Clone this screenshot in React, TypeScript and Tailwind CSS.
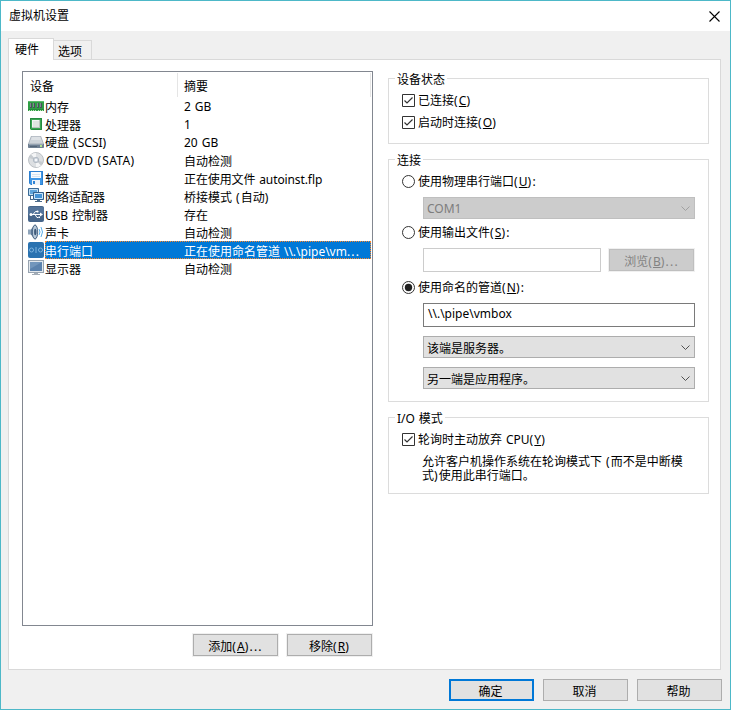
import React, { ReactNode } from 'react';

/* Brackets and ellipses are set slightly wider than the rest of the line. */
function Label({ text }: { text: string }) {
  return (
    <>
      {text.split(/([()]|\.\.\.)/).map((part, i) =>
        i % 2 ? (
          <span key={i} className="tracking-[1.2px]">
            {part}
          </span>
        ) : (
          part
        ),
      )}
    </>
  );
}

/* Text with an underlined access key, e.g. 添加(A)... */
function Key({ text, k, tail = '' }: { text: string; k: string; tail?: string }) {
  return (
    <span>
      <Label text={text + '('} />
      <span className="underline underline-offset-1">{k}</span>
      <Label text={')' + tail} />
    </span>
  );
}

function Svg({ children }: { children: ReactNode }) {
  return (
    <svg className="block size-4 shrink-0" width="16" height="16" viewBox="0 0 16 16">
      {children}
    </svg>
  );
}

const MemoryIcon = () => (
  <Svg>
    <path d="M0 3h16v10H0z" fill="#2f9e45" />
    <path d="M0 3h16v1H0z" fill="#5cbb6e" />
    <path d="M2 5h2v5H2zM5 5h2v5H5zM9 5h2v5H9zM12 5h2v5h-2z" fill="#47545a" />
    <path d="M2 5h1v4H2zM5 5h1v4H5zM9 5h1v4H9zM12 5h1v4h-1z" fill="#7d8b90" />
    <path d="M0 11h16v1H0z" fill="#238a3a" />
    <path d="M1 12h1v1H1zM3 12h1v1H3zM5 12h1v1H5zM7 12h1v1H7zM10 12h1v1h-1zM12 12h1v1h-1zM14 12h1v1h-1z" fill="#b7e0b2" />
  </Svg>
);
const CpuIcon = () => (
  <Svg>
    <path d="M2 2h12v12H3l-1-1z" fill="#3aa653" />
    <path d="M2.500 2.500h11v11h-10l-1-1z" fill="none" stroke="#26893f" />
    <rect x="4" y="4" width="8" height="8" fill="#b9c4bd" />
    <rect x="4" y="4" width="7" height="7" fill="#f3f6f4" />
    <rect x="5" y="5" width="6" height="6" fill="#dfe5e1" />
  </Svg>
);
const DiskIcon = () => (
  <Svg>
    <path d="M3 2h10l3 8v4H0v-4z" fill="#a4adb6" />
    <path d="M3.500 2.500h9L15 9.500H1z" fill="#cdd3d9" />
    <path d="M4 3h8l1 3H3z" fill="#dde1e5" />
    <path d="M0 10h16v3l-1 1H1l-1-1z" fill="#6e7f92" />
    <path d="M1 10h14v1H1z" fill="#95a3b2" />
    <path d="M12 11h2v2h-2z" fill="#b4e88e" />
    <path d="M2 12h7v1H2z" fill="#536579" />
  </Svg>
);
const CdIcon = () => (
  <Svg>
    <circle cx="8" cy="8" r="7.500" fill="#dcdfe2" stroke="#b0b5ba" strokeWidth=".8" />
    <path d="M8 8 3 2.500A7.500 7.500 0 0 1 8 1zM8 8l5 5.500A7.500 7.500 0 0 1 8 15z" fill="#f4f5f6" />
    <path d="M8 8 1 6a7 7 0 0 1 2-3.500zM8 8l7 2a7 7 0 0 1-2 3.500z" fill="#c6cbd0" />
    <circle cx="8" cy="8" r="2.700" fill="#d0d7e0" stroke="#a4adb8" strokeWidth=".7" />
    <circle cx="8" cy="8" r="1.100" fill="#fff" />
  </Svg>
);
const FloppyIcon = () => (
  <Svg>
    <path d="M1 1h14v14H3l-2-2z" fill="#3f97e6" />
    <path d="M1.500 1.500h13v13H3l-1.500-1.500z" fill="none" stroke="#2c7fd0" />
    <path d="M3 2h10v6H3z" fill="#f8fbfe" />
    <path d="M4 4h8v1H4zM4 6h8v1H4z" fill="#d5e4f2" />
    <path d="M4 10h8v5H4z" fill="#eef3f8" />
    <path d="M5 11h2v3H5z" fill="#2f83d3" />
  </Svg>
);
const NetworkIcon = () => (
  <Svg>
    <path d="M.5.5h10v7H.5z" fill="#5fa4da" stroke="#3b6a96" />
    <path d="M1.500 1.500h8v5h-8z" fill="none" stroke="#c3e0f5" />
    <path d="M5.500 4.500h10v7h-10z" fill="#4694d6" stroke="#335f8a" />
    <path d="M6.500 5.500h8v5h-8z" fill="none" stroke="#cbe6fb" />
    <path d="M9 12h3v1h2v1H7v-1h2zM2 8h1v3h2v1H2z" fill="#4c6b8a" />
  </Svg>
);
const UsbIcon = () => (
  <Svg>
    <rect width="16" height="16" rx="2" fill="#46658a" />
    <path d="M0 3a2 2 0 0 1 2-2h12a2 2 0 0 1 2 2v5H0z" fill="#54749a" />
    <path d="M3 8.500h9M5 8.500 7.500 5.500H9M7 8.500l2 3h1.500" fill="none" stroke="#fff" />
    <circle cx="3" cy="8.500" r="1.500" fill="#fff" />
    <path d="M12 6.500l3 2-3 2zM10.500 10.500H12V12h-1.500z" fill="#fff" />
    <circle cx="9.500" cy="5.500" r="1.100" fill="#fff" />
  </Svg>
);
const SoundIcon = () => (
  <Svg>
    <path d="M0 5.500h3L7.500.5v15L3 10.500H0z" fill="#8ea4ba" />
    <path d="M3 5.500l4.500-5v15L3 10.500z" fill="#5d7a99" />
    <ellipse cx="7" cy="8" rx="2.700" ry="7" fill="#b8c9d9" stroke="#4a6685" />
    <ellipse cx="7.300" cy="8" rx="1.200" ry="3.200" fill="#3f5b7a" />
    <path d="M11 5q2 3 0 6M13 3q3 5 0 10" fill="none" stroke="#5aaee8" />
  </Svg>
);
const SerialIcon = () => (
  <Svg>
    <rect width="16" height="16" rx="2" fill="#2a72b0" />
    <circle cx="3.500" cy="8" r="2" fill="none" stroke="#7db3df" />
    <path d="M8 5v6" stroke="#7db3df" />
    <circle cx="12.500" cy="8" r="2" fill="none" stroke="#7db3df" />
  </Svg>
);
const DisplayIcon = () => (
  <Svg>
    <path d="M0 0h16v13H0z" fill="#97a3b0" />
    <path d="M1 1h14v11H1z" fill="#e3e8ed" />
    <path d="M2 2h12v9H2z" fill="#5b82ad" />
    <path d="M2 2h12L2 9z" fill="#7296bc" />
    <path d="M6 13h4v1h2v1H4v-1h2z" fill="#a3adb7" />
  </Svg>
);

const devices: { icon: ReactNode; name: string; summary: string; selected?: boolean }[] = [
  { icon: <MemoryIcon />, name: '内存', summary: '2 GB' },
  { icon: <CpuIcon />, name: '处理器', summary: '1' },
  { icon: <DiskIcon />, name: '硬盘 (SCSI)', summary: '20 GB' },
  { icon: <CdIcon />, name: 'CD/DVD (SATA)', summary: '自动检测' },
  { icon: <FloppyIcon />, name: '软盘', summary: '正在使用文件 autoinst.flp' },
  { icon: <NetworkIcon />, name: '网络适配器', summary: '桥接模式 (自动)' },
  { icon: <UsbIcon />, name: 'USB 控制器', summary: '存在' },
  { icon: <SoundIcon />, name: '声卡', summary: '自动检测' },
  { icon: <SerialIcon />, name: '串行端口', summary: '正在使用命名管道 \\\\.\\pipe\\vm...', selected: true },
  { icon: <DisplayIcon />, name: '显示器', summary: '自动检测' },
];

/* Chinese cells sit one pixel lower than purely Latin ones. */
const cellOffset = (s: string) => (/[\u4e00-\u9fff]/.test(s) && !s.includes('SCSI') ? 'pt-px ' : '');

function DeviceList() {
  return (
    <div className="flex h-[555px] w-[351px] flex-col border border-[#828790] bg-white pl-[5px]">
      <div className="flex h-[25px] pt-px leading-[28px]">
        <div className="w-[150px] border-r border-[#e5e5e5] pl-[2px]">设备</div>
        <div className="w-[193px] border-r border-[#e5e5e5] pl-[6px]">摘要</div>
      </div>
      {devices.map((d) => (
        <div key={d.name} className="flex h-[18px] items-center">
          {d.icon}
          <div
            className={
              'ml-px flex h-[18px] w-[326px] border border-dotted leading-[18px] whitespace-nowrap ' +
              (d.selected ? 'border-[#ff8728] bg-[#0078d7] text-white' : 'border-transparent')
            }
          >
            <div
              className={
                cellOffset(d.name) +
                (d.name.startsWith('CD') ? 'w-[138px] tracking-[0.3px]' : '-ml-px w-[139px]')
              }
            >
              <Label text={d.name} />
            </div>
            <div className={cellOffset(d.summary) + (d.summary.endsWith('flp') ? 'tracking-[-0.1px]' : '')}>
              <Label text={d.summary} />
            </div>
          </div>
        </div>
      ))}
    </div>
  );
}

function Group({ title, className, children }: { title: string; className: string; children: ReactNode }) {
  return (
    <section className={'w-[321px] border border-[#dcdcdc] ' + className}>
      <div className="-mt-2 ml-[6px] h-4 w-fit bg-white px-[2px] leading-[18px]">{title}</div>
      {children}
    </section>
  );
}

function Check({ children }: { children: ReactNode }) {
  return (
    <label className="ml-[13px] flex h-[13px] items-center gap-[3px] whitespace-nowrap">
      <svg className="shrink-0" width="13" height="13" viewBox="0 0 13 13">
        <path d="M.5.5h12v12H.5z" fill="#fff" stroke="#333" />
        <path d="M2.500 6.500 5 9l5.500-5.500" fill="none" stroke="#333" strokeWidth="1.200" />
      </svg>
      {children}
    </label>
  );
}

function Radio({ on, children }: { on?: boolean; children: ReactNode }) {
  return (
    <label className="ml-[13px] flex h-[13px] items-center gap-[3px] whitespace-nowrap">
      <svg className="shrink-0" width="13" height="13" viewBox="0 0 13 13">
        <circle cx="6.500" cy="6.500" r="6" fill="#fff" stroke="#333" />
        {on && <circle cx="6.500" cy="6.500" r="3.700" fill="#222" />}
      </svg>
      {children}
    </label>
  );
}

function Select({ disabled, className, children }: { disabled?: boolean; className: string; children: ReactNode }) {
  return (
    <div
      className={
        'ml-[34px] flex h-[22px] w-[272px] items-center justify-between border pr-[3px] pl-[3px] ' +
        (disabled ? 'border-[#bfbfbf] bg-[#ccc] text-[#7d7d7d] ' : 'border-[#adadad] bg-[#e1e1e1] ') +
        className
      }
    >
      <span className={disabled ? 'pt-[2px]' : 'pt-[3px]'}>{children}</span>
      <svg width="11" height="7" viewBox="0 0 11 7">
        <path d="M1.500 1.500l4 4 4-4" fill="none" stroke={disabled ? '#a0a0a0' : '#505050'} />
      </svg>
    </div>
  );
}

function Button({ className = '', children }: { className?: string; children: ReactNode }) {
  return (
    <button
      className={
        'flex h-[22px] w-[85px] items-center justify-center whitespace-nowrap ' +
        (className || 'border border-[#adadad] bg-[#e1e1e1] pt-[4px] pr-[2px]')
      }
    >
      {children}
    </button>
  );
}

export default function App() {
  return (
    <div className="flex h-[710px] w-[731px] flex-col overflow-hidden border border-[#4db8c8] bg-[#f0f0f0] font-['Noto_Sans','Noto_Sans_CJK_SC',sans-serif] text-[12px] leading-4 text-black [word-spacing:0.8px]">
      <header className="flex h-[30px] shrink-0 items-center justify-between bg-white pr-[10px] pl-2">
        <span>虚拟机设置</span>
        <svg width="11" height="11" viewBox="0 0 11 11">
          <path d="M.5.5l10 10M10.500.5l-10 10" stroke="#000" strokeWidth="1.100" />
        </svg>
      </header>

      <nav className="flex h-[28px] shrink-0 items-end pl-[7px]">
        <div className="z-10 -mb-px h-[22px] w-[46px] border border-b-0 border-[#d9d9d9] bg-white pl-[6px] leading-[21px]">
          硬件
        </div>
        <div className="h-[19px] w-[38px] border-t border-r border-[#d9d9d9] pl-[4px] leading-[21px]">选项</div>
      </nav>

      <main className="ml-[7px] flex h-[611px] w-[713px] shrink-0 border border-[#d9d9d9] bg-white pt-[11px] pl-[13px]">
        <div className="w-[351px]">
          <DeviceList />
          <div className="mt-2 flex justify-end gap-[9px] pr-px">
            <Button className="border border-[#adadad] bg-[#e1e1e1] pt-[3px] outline outline-[#f0f0f0]">
              <Key text="添加" k="A" tail="..." />
            </Button>
            <Button className="border border-[#adadad] bg-[#e1e1e1] pt-[3px] outline outline-[#f0f0f0]">
              <Key text="移除" k="R" />
            </Button>
          </div>
        </div>

        <div className="ml-[15px] flex flex-col pt-[7px]">
          <Group title="设备状态" className="h-[66px]">
            <div className="mt-[7px] flex flex-col gap-[9px]">
              <Check>
                <Key text="已连接" k="C" />
              </Check>
              <Check>
                <Key text="启动时连接" k="O" />
              </Check>
            </div>
          </Group>

          <Group title="连接" className="mt-[15px] h-[243px]">
            <div className="mt-[7px]">
              <Radio>
                <Key text="使用物理串行端口" k="U" tail=":" />
              </Radio>
              <Select disabled className="mt-[9px]">
                COM1
              </Select>
              <div className="mt-[7px]">
                <Radio>
                  <Key text="使用输出文件" k="S" tail=":" />
                </Radio>
              </div>
              <div className="mt-[9px] ml-[34px] flex items-center gap-2">
                <div className="h-6 w-[178px] border border-[#ccc] bg-white" />
                <Button className="border border-[#bfbfbf] bg-[#ccc] pt-[3px] text-[#838383] outline outline-[#f0f0f0]">
                  <Key text="浏览" k="B" tail="..." />
                </Button>
              </div>
              <div className="mt-[9px]">
                <Radio on>
                  <Key text="使用命名的管道" k="N" tail=":" />
                </Radio>
              </div>
              <div className="mt-[9px] ml-[34px] h-6 w-[272px] border border-[#7a7a7a] bg-white pl-1 leading-5">
                {'\\\\.\\pipe\\vmbox'}
              </div>
              <Select className="mt-[9px]">该端是服务器。</Select>
              <Select className="mt-[9px]">另一端是应用程序。</Select>
            </div>
          </Group>

          <Group title="I/O 模式" className="mt-[15px] h-[77px]">
            <div className="mt-[7px]">
              <Check>
                <Key text="轮询时主动放弃 CPU" k="Y" />
              </Check>
              <p className="mt-[9px] ml-[33px] leading-[14px] whitespace-nowrap">
                <Label text="允许客户机操作系统在轮询模式下 (而不是中断模" />
                <br />
                <Label text="式)使用此串行端口。" />
              </p>
            </div>
          </Group>
        </div>
      </main>

      <footer className="mt-[9px] flex gap-[9px] pl-[448px]">
        <Button className="border-2 border-[#0078d7] bg-[#e1e1e1] pt-[3px] pr-[2px]">确定</Button>
        <Button>取消</Button>
        <Button>帮助</Button>
      </footer>
    </div>
  );
}
